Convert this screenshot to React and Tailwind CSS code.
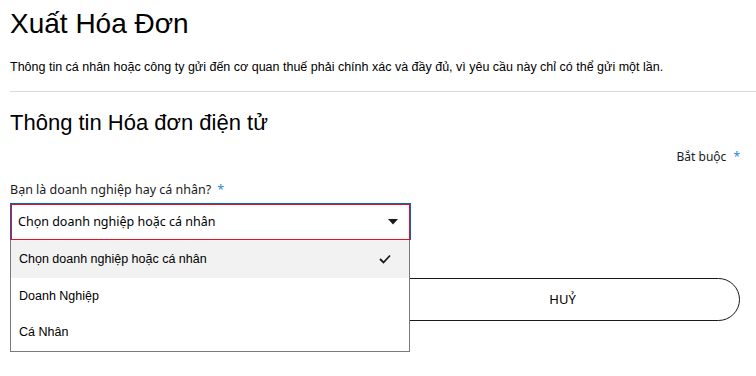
export default function App() {
  return (
    <div className="min-h-screen w-[756px] overflow-hidden bg-white text-black font-['Liberation_Sans',Arial,sans-serif]">

      {/* ================= HEADER ================= */}

      <div className="pl-[10px] pt-[7px]">
        <h1 className="text-[28px] leading-[34px] font-normal text-black">
          Xuất Hóa Đơn
        </h1>
        <p className="mt-[18px] text-[12.5px] leading-[16px] text-black">
          Thông tin cá nhân hoặc công ty gửi đến cơ quan thuế phải chính xác và đầy đủ, vì yêu cầu này chỉ có thể gửi một lần.
        </p>
      </div>

      <div className="ml-[10px] mt-[16px] h-px bg-[#d9d9d9]" />

      {/* ================= FORM ================= */}

      <div className="pl-[10px] w-[740px]">
        <h2 className="mt-[17px] text-[22px] leading-[28px] font-normal text-black">
          Thông tin Hóa đơn điện tử
        </h2>

        <div className="mt-[11px] flex justify-end font-['Noto_Sans',sans-serif] text-[12px] leading-[18px] text-[#1a1a1a]">
          <span>Bắt buộc</span>
          <span className="ml-[7px] text-[#2b88d8]">*</span>
        </div>

        <div className="mt-[15px] font-['Noto_Sans',sans-serif] text-[12.5px] leading-[18px] text-[#1a1a1a]">
          Bạn là doanh nghiệp hay cá nhân?
          <span className="ml-[6px] text-[#2b88d8]">*</span>
        </div>

        <div className="relative mt-[4px] w-[401px]">
          <div className="flex h-[37px] items-center justify-between border border-[#0067b8] border-b-0">
            <div className="flex h-full w-full items-center justify-between border-[1.5px] border-[#e81123] pl-[6px] pr-[10px] font-['Noto_Sans',sans-serif] text-[12.5px] text-black">
              <span>Chọn doanh nghiệp hoặc cá nhân</span>
              <svg width="10" height="6" viewBox="0 0 10 6" className="mr-[1px]">
                <path d="M0 0 H10 L5 5.5 Z" fill="#1a1a1a" />
              </svg>
            </div>
          </div>

          {/* dropdown list */}
          <ul className="absolute left-0 top-[37px] z-10 w-[400px] border border-[#7a7a7a] border-t-0 bg-white text-[12.5px] text-black">
            <li className="flex h-[38px] items-center justify-between bg-[#f2f2f2] pl-[8px] pr-[18px]">
              <span>Chọn doanh nghiệp hoặc cá nhân</span>
              <svg width="12" height="10" viewBox="0 0 12 10">
                <path d="M1 5 L4.5 8.5 L11 1.5" stroke="#1a1a1a" strokeWidth="1.8" fill="none" />
              </svg>
            </li>
            <li className="flex h-[36px] items-center pl-[8px]">Doanh Nghiệp</li>
            <li className="flex h-[37px] items-center pl-[8px]">Cá Nhân</li>
          </ul>
        </div>

        {/* ================= BUTTONS ================= */}

        <div className="mt-[38px] grid grid-cols-2 gap-[20px]">
          <button className="h-[43px] rounded-full bg-[#1a1a1a] text-[13px] text-white font-['Noto_Sans',sans-serif]">
            GỬI
          </button>
          <button className="h-[43px] rounded-full border border-[#1a1a1a] bg-white text-[13px] text-black font-['Noto_Sans',sans-serif]">
            HUỶ
          </button>
        </div>
      </div>
    </div>
  );
}
